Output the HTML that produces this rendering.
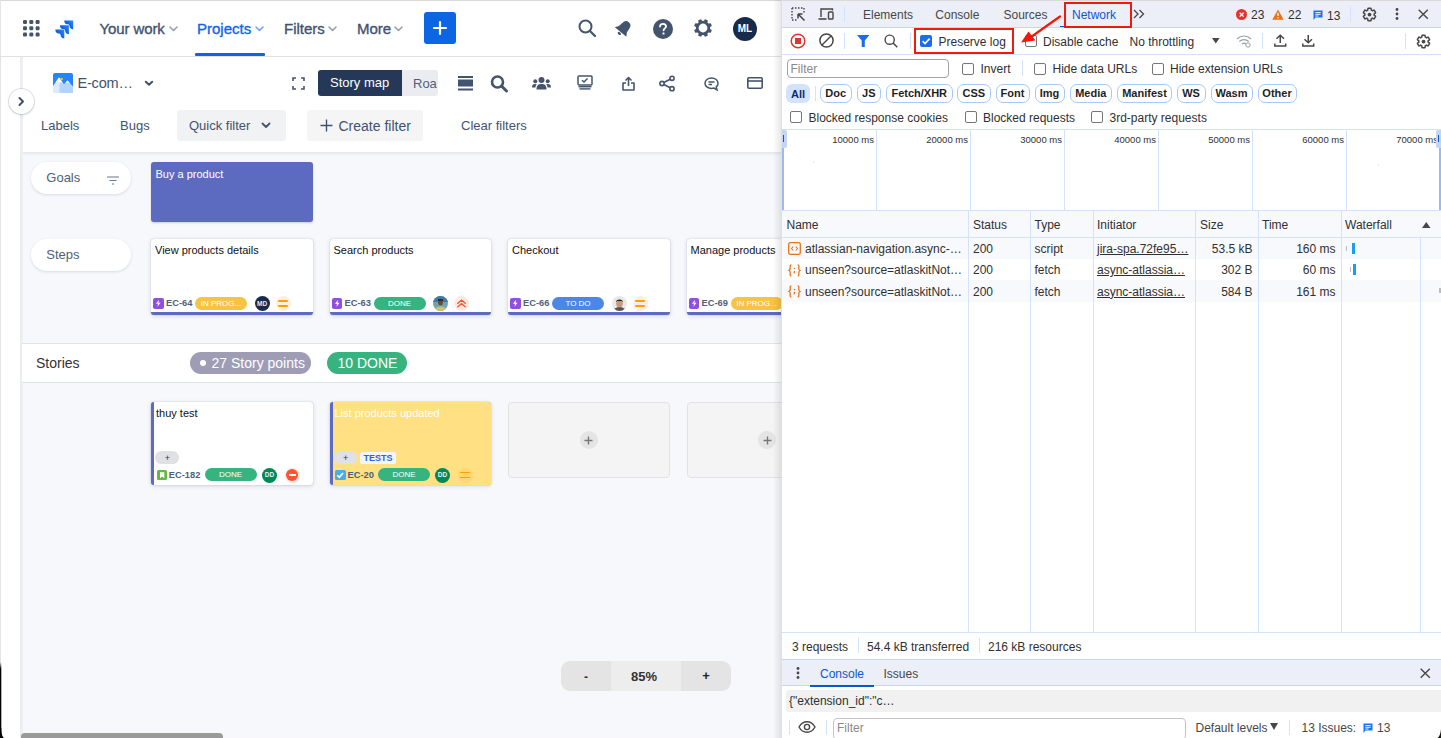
<!DOCTYPE html>
<html><head><meta charset="utf-8">
<style>
*{box-sizing:border-box;margin:0;padding:0}
html,body{width:1441px;height:738px;overflow:hidden;background:#fff;font-family:"Liberation Sans",sans-serif}
.a{position:absolute}
.t{position:absolute;white-space:nowrap;line-height:1}
svg{position:absolute;overflow:visible}
/* page */
#page{position:absolute;left:0;top:0;width:781px;height:738px;background:#fff;overflow:hidden}
.nav{color:#42526E;font-size:15px;font-weight:500;-webkit-text-stroke:0.35px currentColor}
.chev{position:absolute}
.card{position:absolute;background:#fff;border-radius:3px;box-shadow:0 0 1px rgba(9,30,66,.31),0 1px 4px rgba(9,30,66,.16)}
.ctitle{position:absolute;left:4px;top:6px;font-size:11px;color:#111;line-height:1}
.key{position:absolute;font-size:9.5px;font-weight:700;color:#505F79;line-height:1}
.pill{position:absolute;border-radius:7px;font-size:8.5px;color:#fff;text-align:center;line-height:13px;height:13px}
/* devtools */
#dt{position:absolute;left:0;top:0;width:1441px;height:738px;color:#1f1f1f;font-size:12px}
.dtt{position:absolute;white-space:nowrap;line-height:1;font-size:12px;color:#303030}
.cb{position:absolute;width:12px;height:12px;border:1px solid #747775;border-radius:2px;background:#fff}
.chip{position:absolute;height:19px;border:1px solid #A8C7FA;border-radius:7px;font-size:11px;font-weight:700;color:#1f1f1f;text-align:center;line-height:17px}
.sep{position:absolute;width:1px;background:#D3E3FD}
.vline{position:absolute;width:1px;background:#D3E3FD}
</style></head><body>
<div id="page">
  <div class="a" style="left:0;top:0;width:781px;height:1px;background:#D9D9D9"></div>
  <div class="a" style="left:0;top:0;width:1px;height:738px;background:#E4E4E4"></div>
  <!-- ===== NAV ===== -->
  <svg style="left:23px;top:20px" width="17" height="17" viewBox="0 0 17 17">
    <g fill="#44546F">
      <rect x="0" y="0" width="4" height="4" rx="1.3"/><rect x="6.3" y="0" width="4" height="4" rx="1.3"/><rect x="12.6" y="0" width="4" height="4" rx="1.3"/>
      <rect x="0" y="6.3" width="4" height="4" rx="1.3"/><rect x="6.3" y="6.3" width="4" height="4" rx="1.3"/><rect x="12.6" y="6.3" width="4" height="4" rx="1.3"/>
      <rect x="0" y="12.6" width="4" height="4" rx="1.3"/><rect x="6.3" y="12.6" width="4" height="4" rx="1.3"/><rect x="12.6" y="12.6" width="4" height="4" rx="1.3"/>
    </g>
  </svg>
  <svg style="left:55px;top:19.5px" width="19" height="19" viewBox="0 0 19 19">
    <defs><linearGradient id="jg" x1="1" y1="0" x2="0.3" y2="0.6"><stop offset="0" stop-color="#2D8BFF"/><stop offset="1" stop-color="#0A5BD6"/></linearGradient>
    <path id="jc" d="M0 0 H9 V9 Q6.6 9 5.7 7.2 L5.2 5.2 Q4.9 3.9 3.7 3.9 H2.6 Q0.4 3.7 0 0 Z" fill="url(#jg)"/></defs>
    <use href="#jc" x="9.2" y="0.4"/>
    <use href="#jc" x="4.9" y="5.2"/>
    <use href="#jc" x="0.3" y="9.5"/>
  </svg>
  <div class="t nav" style="left:99.5px;top:21px;letter-spacing:-0.1px">Your work</div>
  <svg style="left:169px;top:26.3px" width="9" height="6" viewBox="0 0 9 6"><path d="M1 1 L4.5 4.5 L8 1" stroke="#97A0AF" stroke-width="1.6" fill="none" stroke-linecap="round" stroke-linejoin="round"/></svg>
  <div class="t nav" style="left:197px;top:21px;color:#0C66E4">Projects</div>
  <svg style="left:255px;top:26.3px" width="9" height="6" viewBox="0 0 9 6"><path d="M1 1 L4.5 4.5 L8 1" stroke="#6FA4F5" stroke-width="1.6" fill="none" stroke-linecap="round" stroke-linejoin="round"/></svg>
  <div class="a" style="left:195px;top:53px;width:70px;height:3px;background:#0C66E4;border-radius:1px"></div>
  <div class="t nav" style="left:284px;top:21px">Filters</div>
  <svg style="left:328px;top:26.3px" width="9" height="6" viewBox="0 0 9 6"><path d="M1 1 L4.5 4.5 L8 1" stroke="#97A0AF" stroke-width="1.6" fill="none" stroke-linecap="round" stroke-linejoin="round"/></svg>
  <div class="t nav" style="left:357px;top:21px">More</div>
  <svg style="left:394px;top:26.3px" width="9" height="6" viewBox="0 0 9 6"><path d="M1 1 L4.5 4.5 L8 1" stroke="#97A0AF" stroke-width="1.6" fill="none" stroke-linecap="round" stroke-linejoin="round"/></svg>
  <div class="a" style="left:424px;top:12px;width:32px;height:32px;background:#0C66E4;border-radius:3px"></div>
  <svg style="left:433px;top:21px" width="14" height="14" viewBox="0 0 14 14"><path d="M7 1 V13 M1 7 H13" stroke="#fff" stroke-width="2.2" stroke-linecap="round"/></svg>
  <!-- right icons -->
  <svg style="left:578px;top:19px" width="18" height="18" viewBox="0 0 18 18"><circle cx="7.5" cy="7.5" r="6" stroke="#44546F" stroke-width="2" fill="none"/><path d="M12 12 L17 17" stroke="#44546F" stroke-width="2.2" stroke-linecap="round"/></svg>
  <svg style="left:613px;top:18px" width="21" height="21" viewBox="0 0 21 21"><g transform="rotate(40 10.5 10.5)"><path d="M10.5 2.2 C7.5 2.2 6.3 4 6 7 L5.3 11.5 L3 15 H18 L15.7 11.5 L15 7 C14.7 4 13.5 2.2 10.5 2.2 Z" fill="#44546F"/><ellipse cx="10.5" cy="17" rx="1.9" ry="1.2" fill="#44546F"/></g></svg>
  <svg style="left:653px;top:18.5px" width="20" height="20" viewBox="0 0 20 20"><circle cx="10" cy="10" r="10" fill="#44546F"/><path d="M7 7.6 C7 5.8 8.3 4.8 10 4.8 C11.8 4.8 13 5.9 13 7.4 C13 9.3 10.6 9.4 10.6 11.3" stroke="#fff" stroke-width="1.8" fill="none" stroke-linecap="round"/><rect x="9.5" y="13.6" width="2" height="2" rx="0.4" fill="#fff"/></svg>
  <svg style="left:693.6px;top:19.3px" width="18" height="18" viewBox="0 0 18 18"><g fill="#44546F"><rect x="7.2" y="0" width="3.6" height="4" rx="1" transform="rotate(22.5 9 9)"/><rect x="7.2" y="0" width="3.6" height="4" rx="1" transform="rotate(67.5 9 9)"/><rect x="7.2" y="0" width="3.6" height="4" rx="1" transform="rotate(112.5 9 9)"/><rect x="7.2" y="0" width="3.6" height="4" rx="1" transform="rotate(157.5 9 9)"/><rect x="7.2" y="0" width="3.6" height="4" rx="1" transform="rotate(202.5 9 9)"/><rect x="7.2" y="0" width="3.6" height="4" rx="1" transform="rotate(247.5 9 9)"/><rect x="7.2" y="0" width="3.6" height="4" rx="1" transform="rotate(292.5 9 9)"/><rect x="7.2" y="0" width="3.6" height="4" rx="1" transform="rotate(337.5 9 9)"/></g><circle cx="9" cy="9" r="5.8" fill="none" stroke="#44546F" stroke-width="2.8"/></svg>
  <div class="a" style="left:733px;top:16.5px;width:24px;height:24px;border-radius:50%;background:#172B4D"></div>
  <div class="t" style="left:733px;top:24px;width:24px;text-align:center;color:#fff;font-size:10px;font-weight:700">ML</div>
  <div class="a" style="left:0;top:56px;width:781px;height:1px;background:#DFE1E6"></div>
  <!-- ===== SIDEBAR STRIP ===== -->
  <div class="a" style="left:20px;top:57px;width:3px;height:681px;background:linear-gradient(90deg,#EAEBEF,#F0F1F4)"></div>
  <!-- ===== TOOLBAR ===== -->
  <div class="a" style="left:23px;top:57px;width:758px;height:95px;background:#fff"></div>
  <!-- board bg -->
  <div class="a" style="left:23px;top:152px;width:758px;height:586px;background:#F7F8FC"></div>
  <div class="a" style="left:23px;top:152px;width:758px;height:4px;background:linear-gradient(#E4E6EB,#F7F8FC)"></div>
  <!-- project icon -->
  <svg style="left:53px;top:73px" width="20" height="20" viewBox="0 0 20 20">
    <rect width="20" height="20" rx="2" fill="#2684FF"/>
    <path d="M0 20 V13 L6 4.5 L11 11.5 L14.5 7.5 L20 14 V20 Z" fill="#DEEBFF"/>
    <path d="M6.5 20 V9 L11 11.5 L14.5 7.5 L20 14 V20 Z" fill="#B3D4FF"/>
    <path d="M2.5 9.5 L6 4.5 L9.5 9.5 L7.5 8.8 L6 10 L4.5 8.8 Z M12.5 9.8 L14.5 7.5 L16.8 10.2 L14.5 9.5 Z" fill="#fff"/>
    <circle cx="8.6" cy="6" r="1.3" fill="#FFC400"/>
  </svg>
  <div class="t" style="left:77.5px;top:75.5px;font-size:14.5px;color:#42526E;letter-spacing:-0.2px">E-com…</div>
  <svg style="left:144px;top:80px" width="10" height="7" viewBox="0 0 10 7"><path d="M1.8 1.8 L5 4.8 L8.2 1.8" stroke="#42526E" stroke-width="2" fill="none" stroke-linecap="round" stroke-linejoin="round"/></svg>
  <!-- fullscreen -->
  <svg style="left:292px;top:77px" width="13" height="13" viewBox="0 0 13 13"><path d="M1 4 V1 H4 M9 1 H12 V4 M12 9 V12 H9 M4 12 H1 V9" stroke="#44546F" stroke-width="1.6" fill="none"/></svg>
  <div class="a" style="left:318px;top:70px;width:84px;height:26px;background:#253858;border-radius:3px 0 0 3px"></div>
  <div class="t" style="left:330px;top:76px;font-size:13px;color:#fff">Story map</div>
  <div class="a" style="left:402px;top:70px;width:35.5px;height:26px;background:#EBECF0;border-radius:0 3px 3px 0;overflow:hidden"><div class="t" style="left:11px;top:6.5px;font-size:13px;color:#505F79">Roa</div></div>
  <svg style="left:458px;top:76px" width="15" height="15" viewBox="0 0 15 15"><rect x="0" y="0" width="15" height="2" fill="#44546F"/><rect x="0" y="3.5" width="15" height="7" fill="#44546F"/><rect x="0" y="12.5" width="15" height="2" fill="#44546F"/></svg>
  <svg style="left:490px;top:75px" width="19" height="17" viewBox="0 0 19 17"><circle cx="7.5" cy="7" r="5.5" stroke="#44546F" stroke-width="2.6" fill="none"/><path d="M11.5 11 L16.5 16" stroke="#44546F" stroke-width="3" stroke-linecap="round"/></svg>
  <svg style="left:532px;top:76.5px" width="19" height="13" viewBox="0 0 19 13"><g fill="#44546F"><circle cx="9.5" cy="3" r="3"/><circle cx="3.3" cy="4.3" r="2"/><circle cx="15.7" cy="4.3" r="2"/><path d="M4.5 12.5 C4.5 8 6.5 7 9.5 7 C12.5 7 14.5 8 14.5 12.5 Z"/><path d="M0 10.5 C0 7.5 1.5 7 3.5 7 C4.5 7 4.8 7.3 4.8 7.3 C3.8 8.2 3.5 9.5 3.5 10.5 Z"/><path d="M19 10.5 C19 7.5 17.5 7 15.5 7 C14.5 7 14.2 7.3 14.2 7.3 C15.2 8.2 15.5 9.5 15.5 10.5 Z"/></g></svg>
  <svg style="left:577px;top:75px" width="16" height="16" viewBox="0 0 16 16"><g fill="none" stroke="#44546F" stroke-width="1.5"><rect x="1" y="1" width="14" height="9" rx="1"/><path d="M5 5.2 L7 7 L10.5 3.5"/></g><g fill="#44546F"><rect x="1.5" y="11" width="13" height="1.4"/><rect x="2.5" y="13.2" width="11" height="1.4"/></g></svg>
  <svg style="left:622px;top:75.5px" width="13" height="15" viewBox="0 0 13 15"><g fill="none" stroke="#44546F" stroke-width="1.6" stroke-linejoin="round"><path d="M6.5 10 V1.5 M3.5 4.5 L6.5 1.5 L9.5 4.5"/><path d="M4 7 H1 V14 H12 V7 H9"/></g></svg>
  <svg style="left:658.7px;top:75.5px" width="16" height="15" viewBox="0 0 16 15"><g fill="none" stroke="#44546F" stroke-width="1.6"><circle cx="3" cy="7.5" r="2.1"/><circle cx="13" cy="2.3" r="2.1"/><circle cx="13" cy="12.7" r="2.1"/><path d="M4.8 6.5 L11.2 3.3 M4.8 8.5 L11.2 11.7"/></g></svg>
  <svg style="left:704px;top:76.5px" width="15" height="14" viewBox="0 0 15 14"><g fill="none" stroke="#44546F" stroke-width="1.5"><path d="M7.5 1 C11.2 1 14 3.3 14 6.2 C14 7.8 13.3 9 12.2 9.8 L13 12.8 L10 11 C9.2 11.3 8.4 11.4 7.5 11.4 C3.8 11.4 1 9.1 1 6.2 C1 3.3 3.8 1 7.5 1 Z"/><path d="M4.5 5 H10.5 M4.5 7.5 H8"/></g></svg>
  <svg style="left:746.6px;top:77px" width="16" height="12" viewBox="0 0 16 12"><g fill="none" stroke="#44546F" stroke-width="1.6"><rect x="0.8" y="0.8" width="14.4" height="10.4" rx="1.2"/><path d="M0.8 4 H15.2"/></g></svg>
  <!-- filters row -->
  <div class="t" style="left:41px;top:118.7px;font-size:13px;color:#42526E">Labels</div>
  <div class="t" style="left:120px;top:118.7px;font-size:13px;color:#42526E">Bugs</div>
  <div class="a" style="left:177px;top:109.5px;width:109px;height:31.5px;background:#F1F2F4;border-radius:3px"></div>
  <div class="t" style="left:189px;top:118.7px;font-size:13px;color:#42526E">Quick filter</div>
  <svg style="left:261px;top:122px" width="10" height="7" viewBox="0 0 10 7"><path d="M1.5 1.5 L5 5 L8.5 1.5" stroke="#42526E" stroke-width="1.8" fill="none" stroke-linecap="round" stroke-linejoin="round"/></svg>
  <div class="a" style="left:307px;top:109.5px;width:115.5px;height:31.5px;background:#F5F5F6;border-radius:3px"></div>
  <svg style="left:320px;top:118.5px" width="13" height="13" viewBox="0 0 13 13"><path d="M6.5 0.5 V12.5 M0.5 6.5 H12.5" stroke="#42526E" stroke-width="1.4"/></svg>
  <div class="t" style="left:338.5px;top:118.5px;font-size:14px;color:#42526E">Create filter</div>
  <div class="t" style="left:461px;top:118.7px;font-size:13px;color:#42526E">Clear filters</div>
  <!-- sidebar toggle -->
  <div class="a" style="left:8.5px;top:88.5px;width:25px;height:25px;border-radius:50%;background:#fff;box-shadow:0 0 0 1px rgba(9,30,66,.1),0 1px 3px rgba(9,30,66,.15)"></div>
  <svg style="left:17.5px;top:96.5px" width="7" height="9" viewBox="0 0 7 9"><path d="M1.5 1 L5 4.5 L1.5 8" stroke="#42526E" stroke-width="2" fill="none" stroke-linecap="round" stroke-linejoin="round"/></svg>

  <!-- ===== BOARD ===== -->
  <div class="a" style="left:31px;top:162px;width:100px;height:32px;border-radius:16px;background:#fff;box-shadow:0 1px 3px rgba(9,30,66,.13)"></div>
  <div class="t" style="left:46.3px;top:171px;font-size:13px;color:#505F79">Goals</div>
  <svg style="left:107px;top:175.5px" width="12" height="9" viewBox="0 0 12 9"><path d="M0 1 H12 M2.5 4.5 H9.5 M5 8 H7" stroke="#6B778C" stroke-width="1.1"/></svg>
  <div class="a" style="left:31px;top:238.5px;width:100px;height:32.5px;border-radius:16px;background:#fff;box-shadow:0 1px 3px rgba(9,30,66,.13)"></div>
  <div class="t" style="left:46.3px;top:247.5px;font-size:13px;color:#505F79">Steps</div>

  <div class="a" style="left:151px;top:162px;width:161.75px;height:59.5px;background:#5C6BC0;border-radius:3px;box-shadow:0 1px 2px rgba(9,30,66,.2)"></div>
  <div class="t" style="left:155.5px;top:169px;font-size:11px;color:#fff">Buy a product</div>

  <!-- step cards -->
  <div class="card" style="left:151px;top:238.5px;width:161.75px;height:76.5px;border-bottom:3px solid #5C6BC0">
    <div class="ctitle">View products details</div>
  </div>
  <div class="card" style="left:329.5px;top:238.5px;width:161.75px;height:76.5px;border-bottom:3px solid #5C6BC0">
    <div class="ctitle">Search products</div>
  </div>
  <div class="card" style="left:508px;top:238.5px;width:161.75px;height:76.5px;border-bottom:3px solid #5C6BC0">
    <div class="ctitle">Checkout</div>
  </div>
  <div class="card" style="left:686.5px;top:238.5px;width:161.75px;height:76.5px;border-bottom:3px solid #5C6BC0">
    <div class="ctitle">Manage products</div>
  </div>

  <!-- stories band -->
  <div class="a" style="left:22px;top:343px;width:759px;height:39.5px;background:#fff;border-top:1px solid #DFE3EC;border-bottom:1px solid #DFE3EC"></div>
  <div class="t" style="left:36px;top:356px;font-size:14px;color:#333">Stories</div>
  <div class="a" style="left:189.5px;top:352px;width:121.5px;height:22px;border-radius:11px;background:#9E9DB5"></div>
  <div class="a" style="left:200px;top:360px;width:6px;height:6px;border-radius:50%;background:#fff"></div>
  <div class="t" style="left:211.5px;top:356px;font-size:14px;color:#fff">27 Story points</div>
  <div class="a" style="left:327px;top:352px;width:80px;height:22px;border-radius:11px;background:#36B37E"></div>
  <div class="t" style="left:337.5px;top:356px;font-size:14px;color:#fff">10 DONE</div>

  <!-- story cards -->
  <div class="card" style="left:151px;top:402px;width:161.5px;height:83px;border-left:3px solid #5C6BC0">
    <div class="ctitle" style="left:2px">thuy test</div>
  </div>
  <div class="card" style="left:329.5px;top:402px;width:161.5px;height:83px;border-left:3px solid #5C6BC0;background:#FFE082">
    <div class="ctitle" style="left:2px;color:#fff">List products updated</div>
  </div>
  <div class="a" style="left:508px;top:402px;width:161.5px;height:76px;background:#F4F4F4;border:1px solid #E2E2E2;border-radius:4px"></div>
  <div class="a" style="left:579.5px;top:431px;width:18px;height:18px;border-radius:50%;background:#E4E4E4"></div>
  <svg style="left:584px;top:435.5px" width="9" height="9" viewBox="0 0 9 9"><path d="M4.5 0.5 V8.5 M0.5 4.5 H8.5" stroke="#777" stroke-width="1.4"/></svg>
  <div class="a" style="left:686.5px;top:402px;width:161.5px;height:76px;background:#F4F4F4;border:1px solid #E2E2E2;border-radius:4px"></div>
  <div class="a" style="left:758px;top:431px;width:18px;height:18px;border-radius:50%;background:#E4E4E4"></div>
  <svg style="left:762.5px;top:435.5px" width="9" height="9" viewBox="0 0 9 9"><path d="M4.5 0.5 V8.5 M0.5 4.5 H8.5" stroke="#777" stroke-width="1.4"/></svg>

  <div class="a" style="left:153px;top:298.0px;width:10.8px;height:10.8px;background:#904EE2;border-radius:2px"></div><svg style="left:153px;top:298.0px" width="10.5" height="10.5" viewBox="0 0 10.5 10.5"><path d="M6 1.8 L3 5.8 H5 L4.5 8.8 L7.5 4.8 H5.5 Z" fill="#fff"/></svg>
<div class="t" style="left:166px;top:299.0px;font-size:9.3px;font-weight:700;color:#505F79">EC-64</div>
<div class="a" style="left:195px;top:297.0px;width:52px;height:13px;border-radius:6.5px;background:#F6C342"></div><div class="t" style="left:195px;top:300.0px;width:52px;text-align:center;font-size:8px;color:#fff">IN PROG...</div>
<div class="a" style="left:254.6px;top:296.0px;width:15px;height:15px;border-radius:50%;background:#172B4D"></div><div class="t" style="left:254.6px;top:300.5px;width:15px;text-align:center;font-size:6.5px;font-weight:700;color:#fff;opacity:.9">MD</div>
<div class="a" style="left:275.6px;top:296.0px;width:15px;height:15px;border-radius:50%;background:#FFEDE0"></div><div class="a" style="left:278.1px;top:300.1px;width:10px;height:1.9px;background:#FFA000;border-radius:1px"></div><div class="a" style="left:278.1px;top:305.0px;width:10px;height:1.9px;background:#FFA000;border-radius:1px"></div>
<div class="a" style="left:331.5px;top:298.0px;width:10.8px;height:10.8px;background:#904EE2;border-radius:2px"></div><svg style="left:331.5px;top:298.0px" width="10.5" height="10.5" viewBox="0 0 10.5 10.5"><path d="M6 1.8 L3 5.8 H5 L4.5 8.8 L7.5 4.8 H5.5 Z" fill="#fff"/></svg>
<div class="t" style="left:344.5px;top:299.0px;font-size:9.3px;font-weight:700;color:#505F79">EC-63</div>
<div class="a" style="left:373.5px;top:297.0px;width:52px;height:13px;border-radius:6.5px;background:#36B37E"></div><div class="t" style="left:373.5px;top:300.0px;width:52px;text-align:center;font-size:8px;color:#fff">DONE</div>
<svg style="left:433.1px;top:296.0px" width="15" height="15" viewBox="0 0 15 15"><defs><clipPath id="pc433.1"><circle cx="7.5" cy="7.5" r="7.5"/></clipPath></defs><g clip-path="url(#pc433.1)"><rect width="15" height="15" fill="#6FA3B8"/><rect y="0" width="15" height="6" fill="#3E7BA0"/><ellipse cx="7.5" cy="15" rx="6.5" ry="4.5" fill="#C9C36A"/><ellipse cx="7.5" cy="6.5" rx="2.4" ry="3" fill="#6B4A35"/><rect x="5" y="3.2" width="5" height="1.6" fill="#222"/></g></svg>
<div class="a" style="left:454.1px;top:296.0px;width:15px;height:15px;border-radius:50%;background:#FFE9E3"></div><svg style="left:454.1px;top:296.0px" width="15" height="15" viewBox="0 0 15 15"><path d="M3.8 7.3 L7.5 4.2 L11.2 7.3 M3.8 10.8 L7.5 7.7 L11.2 10.8" stroke="#FF5630" stroke-width="1.5" fill="none" stroke-linecap="round"/></svg>
<div class="a" style="left:510px;top:298.0px;width:10.8px;height:10.8px;background:#904EE2;border-radius:2px"></div><svg style="left:510px;top:298.0px" width="10.5" height="10.5" viewBox="0 0 10.5 10.5"><path d="M6 1.8 L3 5.8 H5 L4.5 8.8 L7.5 4.8 H5.5 Z" fill="#fff"/></svg>
<div class="t" style="left:523px;top:299.0px;font-size:9.3px;font-weight:700;color:#505F79">EC-66</div>
<div class="a" style="left:552px;top:297.0px;width:52px;height:13px;border-radius:6.5px;background:#4C87E6"></div><div class="t" style="left:552px;top:300.0px;width:52px;text-align:center;font-size:8px;color:#fff">TO DO</div>
<svg style="left:612px;top:296.0px" width="15" height="15" viewBox="0 0 15 15"><defs><clipPath id="pc612"><circle cx="7.5" cy="7.5" r="7.5"/></clipPath></defs><g clip-path="url(#pc612)"><rect width="15" height="15" fill="#E8E8E8"/><ellipse cx="7.5" cy="15" rx="6" ry="4" fill="#555"/><ellipse cx="7.5" cy="7.5" rx="3.3" ry="3.8" fill="#C89A7A"/><path d="M3.8 6.5 C3.8 2.5 11.2 2.5 11.2 6.5 L10 5 L5 5 Z" fill="#222"/></g></svg>
<div class="a" style="left:632.6px;top:296.0px;width:15px;height:15px;border-radius:50%;background:#FFEDE0"></div><div class="a" style="left:635.1px;top:300.1px;width:10px;height:1.9px;background:#FFA000;border-radius:1px"></div><div class="a" style="left:635.1px;top:305.0px;width:10px;height:1.9px;background:#FFA000;border-radius:1px"></div>
<div class="a" style="left:688.5px;top:298.0px;width:10.8px;height:10.8px;background:#904EE2;border-radius:2px"></div><svg style="left:688.5px;top:298.0px" width="10.5" height="10.5" viewBox="0 0 10.5 10.5"><path d="M6 1.8 L3 5.8 H5 L4.5 8.8 L7.5 4.8 H5.5 Z" fill="#fff"/></svg>
<div class="t" style="left:701.5px;top:299.0px;font-size:9.3px;font-weight:700;color:#505F79">EC-69</div>
<div class="a" style="left:730.5px;top:297.0px;width:52px;height:13px;border-radius:6.5px;background:#F6C342"></div><div class="t" style="left:730.5px;top:300.0px;width:52px;text-align:center;font-size:8px;color:#fff">IN PROG...</div>
<div class="a" style="left:155.3px;top:451.2px;width:24px;height:12.8px;border-radius:6.4px;background:#DFE1E6"></div><div class="t" style="left:155.3px;top:453.7px;width:24px;text-align:center;font-size:9px;color:#253858">+</div>
<div class="a" style="left:156.8px;top:470px;width:10.3px;height:10.3px;background:#63BA3C;border-radius:1.5px"></div><svg style="left:156.8px;top:470px" width="10.3" height="10.3" viewBox="0 0 10.3 10.3"><path d="M3 2.2 H7.3 V8.3 L5.15 6.5 L3 8.3 Z" fill="#fff"/></svg>
<div class="t" style="left:168.8px;top:470.6px;font-size:9.3px;font-weight:700;color:#505F79">EC-182</div>
<div class="a" style="left:204.5px;top:468.4px;width:52px;height:13px;border-radius:6.5px;background:#36B37E"></div><div class="t" style="left:204.5px;top:471.4px;width:52px;text-align:center;font-size:8px;color:#fff">DONE</div>
<div class="a" style="left:261.9px;top:467.5px;width:15px;height:15px;border-radius:50%;background:#00875A"></div><div class="t" style="left:261.9px;top:472.0px;width:15px;text-align:center;font-size:6.5px;font-weight:700;color:#fff;opacity:.9">DD</div>
<div class="a" style="left:284.5px;top:467.5px;width:15px;height:15px;border-radius:50%;background:#FFE3DC"></div><div class="a" style="left:286.0px;top:469.0px;width:12px;height:12px;border-radius:50%;background:#FF5630"></div><div class="a" style="left:288.5px;top:474.1px;width:7px;height:1.8px;background:#fff"></div>
<div class="a" style="left:334.0px;top:451.2px;width:23.4px;height:12.8px;border-radius:6.4px;background:#DFE1E6"></div><div class="t" style="left:334.0px;top:453.7px;width:23.4px;text-align:center;font-size:9px;color:#253858">+</div>
<div class="a" style="left:360.0px;top:451.6px;width:36px;height:12.4px;border-radius:2px;background:#F4F5F7"></div><div class="t" style="left:360.0px;top:454px;width:36px;text-align:center;font-size:9px;font-weight:700;color:#2E63D8">TESTS</div>
<div class="a" style="left:335.3px;top:470px;width:10.3px;height:10.3px;background:#4BADE8;border-radius:1.5px"></div><svg style="left:335.3px;top:470px" width="10.3" height="10.3" viewBox="0 0 10.3 10.3"><path d="M2.3 5.3 L4.3 7.3 L8 3" stroke="#fff" stroke-width="1.6" fill="none"/></svg>
<div class="t" style="left:347.5px;top:470.6px;font-size:9.3px;font-weight:700;color:#505F79">EC-20</div>
<div class="a" style="left:378.0px;top:468.4px;width:52px;height:13px;border-radius:6.5px;background:#36B37E"></div><div class="t" style="left:378.0px;top:471.4px;width:52px;text-align:center;font-size:8px;color:#fff">DONE</div>
<div class="a" style="left:435.0px;top:467.5px;width:15px;height:15px;border-radius:50%;background:#00875A"></div><div class="t" style="left:435.0px;top:472.0px;width:15px;text-align:center;font-size:6.5px;font-weight:700;color:#fff;opacity:.9">DD</div>
<div class="a" style="left:457.5px;top:467.5px;width:15px;height:15px;border-radius:50%;background:#FFD676"></div><div class="a" style="left:460.0px;top:471.6px;width:10px;height:1.9px;background:#FFA000;border-radius:1px"></div><div class="a" style="left:460.0px;top:476.5px;width:10px;height:1.9px;background:#FFA000;border-radius:1px"></div>
  <!-- zoom widget -->
  <div class="a" style="left:561px;top:661px;width:170px;height:30px;border-radius:9px;background:#E4E4E4;overflow:hidden"><div class="a" style="left:50px;top:0;width:70px;height:30px;background:#EDEDED"></div></div>
  <div class="t" style="left:561px;top:671px;width:50px;text-align:center;font-size:12px;font-weight:700;color:#333">-</div>
  <div class="t" style="left:609px;top:670px;width:70px;text-align:center;font-size:13px;font-weight:700;color:#333">85%</div>
  <div class="t" style="left:681px;top:669.3px;width:50px;text-align:center;font-size:13px;font-weight:700;color:#222">+</div>
  <!-- scrollbar -->
  <div class="a" style="left:21px;top:733px;width:202px;height:8px;border-radius:4px;background:#9A9A9A"></div>
  <!-- right edge shadow -->
  <div class="a" style="left:773px;top:0;width:8px;height:738px;background:linear-gradient(90deg,rgba(0,0,0,0),rgba(0,0,0,.09))"></div>
  <!-- bottom-left window corner -->
  <svg style="left:0;top:650px" width="12" height="88" viewBox="0 0 12 88"><defs><linearGradient id="blk" x1="0" y1="0" x2="0" y2="1"><stop offset="0" stop-color="#000" stop-opacity="0"/><stop offset="1" stop-color="#000"/></linearGradient></defs><rect x="0" y="12" width="1.3" height="7" fill="url(#blk)"/><rect x="0" y="19" width="1.3" height="69" fill="#000"/><path d="M0 78 V88 H4 Q1.3 86 1.3 78 Z" fill="#000"/></svg>
</div>

<div id="dt">
  <div class="a" style="left:781px;top:0;width:660px;height:738px;background:#fff"></div>
  <div class="a" style="left:781px;top:0;width:660px;height:1px;background:#D9D9D9"></div>
  <div class="a" style="left:781px;top:0;width:1px;height:738px;background:#D3E2FA"></div>
  <!-- tab bar -->
  <div class="a" style="left:782px;top:1px;width:659px;height:26px;background:#ECEFF7"></div>
  <div class="a" style="left:782px;top:27px;width:659px;height:1px;background:#C6D5F0"></div>
  <svg style="left:791px;top:7px" width="15" height="14" viewBox="0 0 15 14"><path d="M1 1 H13 M1 1 V13 M1 13 H6 M13 1 V6" stroke="#474747" stroke-width="1.4" stroke-dasharray="1.5 1.5" fill="none"/><path d="M7 7 L13.5 13.5 M7 7 H11.5 M7 7 V11.5" stroke="#474747" stroke-width="1.5" fill="none"/></svg>
  <svg style="left:818px;top:8px" width="16" height="12" viewBox="0 0 16 12"><path d="M3 9 V1 H14.5 V2.5" stroke="#474747" stroke-width="1.4" fill="none"/><path d="M0.5 11 H8.5" stroke="#474747" stroke-width="1.6"/><rect x="10.5" y="4" width="4.5" height="7" rx="0.8" stroke="#474747" stroke-width="1.4" fill="none"/></svg>
  <div class="sep" style="left:844px;top:6px;height:15.5px"></div>
  <div class="dtt" style="left:863px;top:9px;color:#474747">Elements</div>
  <div class="dtt" style="left:935.3px;top:9px;color:#474747">Console</div>
  <div class="dtt" style="left:1003.5px;top:9px;color:#474747">Sources</div>
  <div class="a" style="left:1060px;top:25.5px;width:8px;height:1.5px;background:#0B57D0"></div>
  <div class="dtt" style="left:1072px;top:9px;color:#0B57D0">Network</div>
  <svg style="left:1133px;top:8.5px" width="12" height="10" viewBox="0 0 12 10"><path d="M1 1 L5 5 L1 9 M6.5 1 L10.5 5 L6.5 9" stroke="#474747" stroke-width="1.3" fill="none"/></svg>
  <!-- counters -->
  <div class="a" style="left:1235.5px;top:9px;width:11.3px;height:11.3px;border-radius:50%;background:#DC362E"></div>
  <svg style="left:1235.5px;top:9px" width="11.3" height="11.3" viewBox="0 0 11.3 11.3"><path d="M3.7 3.7 L7.6 7.6 M7.6 3.7 L3.7 7.6" stroke="#fff" stroke-width="1.3"/></svg>
  <div class="dtt" style="left:1251px;top:9px;color:#303030">23</div>
  <svg style="left:1272px;top:8.5px" width="12" height="11" viewBox="0 0 12 11"><path d="M6 0.5 L11.7 10.7 H0.3 Z" fill="#E8711A"/><path d="M6 3.8 V7" stroke="#fff" stroke-width="1.3"/><circle cx="6" cy="8.8" r="0.75" fill="#fff"/></svg>
  <div class="dtt" style="left:1288px;top:9px;color:#303030">22</div>
  <svg style="left:1312.5px;top:9.5px" width="10" height="10.5" viewBox="0 0 10 10.5"><path d="M0.5 0.5 H9.5 V7.5 H2.5 L0.5 10 Z" fill="#1A73E8"/><path d="M2.3 2.6 H7.7 M2.3 4.3 H7.7 M2.3 6 H5.5" stroke="#fff" stroke-width="0.9"/></svg>
  <div class="dtt" style="left:1327px;top:9.5px;color:#303030">13</div>
  <div class="sep" style="left:1350px;top:6px;height:15.5px"></div>
  <svg style="left:1361.5px;top:6.5px" width="15" height="15" viewBox="0 0 24 24"><path fill="none" stroke="#474747" stroke-width="2.4" d="M19.43 12.98c.04-.32.07-.64.07-.98s-.03-.66-.07-.98l2.11-1.65a.5.5 0 0 0 .12-.64l-2-3.46a.5.5 0 0 0-.61-.22l-2.49 1a7.3 7.3 0 0 0-1.69-.98l-.38-2.65A.49.49 0 0 0 14 2h-4a.49.49 0 0 0-.49.42l-.38 2.65c-.61.25-1.170.59-1.69.98l-2.49-1a.5.5 0 0 0-.61.22l-2 3.460a.49.49 0 0 0 .12.64l2.11 1.65c-.04.32-.07.65-.07.98s.03.66.07.98l-2.11 1.65a.5.5 0 0 0-.12.64l2 3.46a.5.5 0 0 0 .61.22l2.49-1c.52.4 1.08.73 1.69.98l.38 2.65c.03.24.24.42.49.42h4c.25 0 .46-.18.49-.42l.38-2.65c.61-.25 1.17-.59 1.69-.98l2.49 1a.5.5 0 0 0 .61-.22l2-3.46a.5.5 0 0 0-.12-.64l-2.110-1.65z"/><circle cx="12" cy="12" r="3" fill="#474747"/></svg>
  <svg style="left:1395px;top:8px" width="4" height="12" viewBox="0 0 4 12"><g fill="#474747"><circle cx="2" cy="1.5" r="1.4"/><circle cx="2" cy="6" r="1.4"/><circle cx="2" cy="10.5" r="1.4"/></g></svg>
  <svg style="left:1418px;top:9px" width="10.5" height="10.5" viewBox="0 0 10.5 10.5"><path d="M0.7 0.7 L9.8 9.8 M9.8 0.7 L0.7 9.8" stroke="#474747" stroke-width="1.4"/></svg>
  <!-- toolbar row -->
  <div class="a" style="left:782px;top:54px;width:659px;height:1px;background:#D3E3FD"></div>
  <svg style="left:790px;top:33px" width="16" height="16" viewBox="0 0 16 16"><circle cx="8" cy="8" r="6.8" stroke="#DC362E" stroke-width="1.5" fill="none"/><rect x="5" y="5" width="6" height="6" fill="#DC362E"/></svg>
  <svg style="left:818.5px;top:33.3px" width="15" height="15" viewBox="0 0 15 15"><circle cx="7.5" cy="7.5" r="6.6" stroke="#474747" stroke-width="1.5" fill="none"/><path d="M3 12 L12 3" stroke="#474747" stroke-width="1.5"/></svg>
  <div class="sep" style="left:844px;top:33px;height:16px"></div>
  <svg style="left:857px;top:35px" width="12.5" height="12" viewBox="0 0 12.5 12"><path d="M0 0 H12.5 L7.8 5.5 V12 H4.7 V5.5 Z" fill="#1A6DE8"/></svg>
  <svg style="left:884px;top:34px" width="14" height="14" viewBox="0 0 14 14"><circle cx="5.7" cy="5.7" r="4.6" stroke="#474747" stroke-width="1.4" fill="none"/><path d="M9 9 L13.3 13.3" stroke="#474747" stroke-width="1.5"/></svg>
  <div class="sep" style="left:909.5px;top:33px;height:16px"></div>
  <div class="a" style="left:914px;top:27.5px;width:100px;height:26px;border:2px solid #F0190C"></div>
  <div class="a" style="left:920px;top:35px;width:12px;height:12px;border-radius:2px;background:#1A6DF0"></div>
  <svg style="left:920px;top:35px" width="12" height="12" viewBox="0 0 12 12"><path d="M2.6 6.2 L5 8.5 L9.6 3.6" stroke="#fff" stroke-width="1.6" fill="none"/></svg>
  <div class="dtt" style="left:938.5px;top:36px">Preserve log</div>
  <div class="cb" style="left:1024.5px;top:35px"></div>
  <div class="dtt" style="left:1043px;top:36px">Disable cache</div>
  <div class="dtt" style="left:1129.5px;top:36px">No throttling</div>
  <svg style="left:1212.2px;top:37.6px" width="7.6" height="5.6" viewBox="0 0 7.6 5.6"><path d="M0 0 H7.6 L3.8 5.6 Z" fill="#474747"/></svg>
  <svg style="left:1236px;top:33.5px" width="16" height="14" viewBox="0 0 16 14"><g fill="none" stroke="#9AA0A6" stroke-width="1.2"><path d="M1 5 C5 1 11 1 15 5"/><path d="M3.3 7.5 C6 5 10 5 12.7 7.5"/><path d="M6 10 C7 9.2 9 9.2 10 10"/></g><circle cx="12" cy="11" r="2.2" fill="#fff" stroke="#9AA0A6" stroke-width="1"/></svg>
  <div class="sep" style="left:1261.5px;top:33px;height:16px"></div>
  <svg style="left:1274px;top:34px" width="12.5" height="13" viewBox="0 0 12.5 13"><path d="M6.25 9 V1.2 M2.5 4.8 L6.25 1.2 L10 4.8 M0.8 9.5 V12 H11.7 V9.5" stroke="#474747" stroke-width="1.5" fill="none"/></svg>
  <svg style="left:1301.5px;top:34px" width="12.5" height="13" viewBox="0 0 12.5 13"><path d="M6.25 1 V8.8 M2.5 5.2 L6.25 8.8 L10 5.2 M0.8 9.5 V12 H11.7 V9.5" stroke="#474747" stroke-width="1.5" fill="none"/></svg>
  <div class="sep" style="left:1404.5px;top:33px;height:16px"></div>
  <svg style="left:1415.5px;top:33.5px" width="15" height="15" viewBox="0 0 24 24"><path fill="none" stroke="#474747" stroke-width="2.4" d="M19.43 12.98c.04-.32.07-.64.07-.98s-.03-.66-.07-.98l2.11-1.65a.5.5 0 0 0 .12-.64l-2-3.46a.5.5 0 0 0-.61-.22l-2.49 1a7.3 7.3 0 0 0-1.69-.98l-.38-2.65A.49.49 0 0 0 14 2h-4a.49.49 0 0 0-.49.42l-.38 2.65c-.61.25-1.17.59-1.69.98l-2.49-1a.5.5 0 0 0-.61.22l-2 3.46a.49.49 0 0 0 .12.64l2.11 1.65c-.04.32-.07.65-.07.98s.03.66.07.98l-2.11 1.65a.5.5 0 0 0-.12.64l2 3.46a.5.5 0 0 0 .61.22l2.49-1c.52.4 1.08.73 1.69.98l.38 2.65c.03.24.24.42.49.42h4c.25 0 .46-.18.49-.42l.38-2.65c.61-.25 1.17-.59 1.69-.98l2.49 1a.5.5 0 0 0 .61-.22l2-3.46a.5.5 0 0 0-.12-.64l-2.11-1.65z"/><circle cx="12" cy="12" r="3" fill="#474747"/></svg>
  <!-- arrow -->
  <svg style="left:1015px;top:10px" width="50" height="40" viewBox="0 0 50 40"><path d="M45 6.5 L16 27" stroke="#F0190C" stroke-width="2.2" stroke-linecap="round"/><path d="M6 32.5 L13.5 21.5 L20.5 30.5 Z" fill="#F0190C"/></svg>
  <div class="a" style="left:1064px;top:2px;width:68px;height:25.5px;border:2px solid #F0190C"></div>
  <!-- filter row -->
  <div class="a" style="left:786.5px;top:58.5px;width:162px;height:19.5px;border:1px solid #A3A3A3;border-radius:4px;background:#fff"></div>
  <div class="dtt" style="left:790.5px;top:63px;color:#8A8A8A">Filter</div>
  <div class="cb" style="left:962px;top:62.5px"></div>
  <div class="dtt" style="left:980.5px;top:63px">Invert</div>
  <div class="sep" style="left:1021.5px;top:60px;height:16px"></div>
  <div class="cb" style="left:1034px;top:62.5px"></div>
  <div class="dtt" style="left:1052.5px;top:63px">Hide data URLs</div>
  <div class="cb" style="left:1152px;top:62.5px"></div>
  <div class="dtt" style="left:1170px;top:63px">Hide extension URLs</div>
  <!-- chips -->
  <div class="a" style="left:786px;top:84px;width:24px;height:19px;border-radius:6px;background:#D3E3FD"></div>
  <div class="t" style="left:786px;top:88.5px;width:24px;text-align:center;font-size:11px;font-weight:700;color:#0A2E6E">All</div>
  <div class="sep" style="left:815px;top:86px;height:15px"></div>
  <div class="chip" style="left:819.5px;top:84px;width:32.5px">Doc</div>
  <div class="chip" style="left:856.5px;top:84px;width:24.5px">JS</div>
  <div class="chip" style="left:886px;top:84px;width:66.5px">Fetch/XHR</div>
  <div class="chip" style="left:956.5px;top:84px;width:34.5px">CSS</div>
  <div class="chip" style="left:995.5px;top:84px;width:34px">Font</div>
  <div class="chip" style="left:1034.5px;top:84px;width:30px">Img</div>
  <div class="chip" style="left:1069.5px;top:84px;width:42.5px">Media</div>
  <div class="chip" style="left:1117px;top:84px;width:55px">Manifest</div>
  <div class="chip" style="left:1176.5px;top:84px;width:29px">WS</div>
  <div class="chip" style="left:1210.5px;top:84px;width:42px">Wasm</div>
  <div class="chip" style="left:1257.5px;top:84px;width:39px">Other</div>
  <!-- blocked row -->
  <div class="cb" style="left:790px;top:111px"></div>
  <div class="dtt" style="left:808.5px;top:111.5px">Blocked response cookies</div>
  <div class="cb" style="left:964.5px;top:111px"></div>
  <div class="dtt" style="left:983px;top:111.5px">Blocked requests</div>
  <div class="cb" style="left:1091px;top:111px"></div>
  <div class="dtt" style="left:1109.5px;top:111.5px">3rd-party requests</div>
  <div class="a" style="left:782px;top:129px;width:659px;height:1px;background:#D3E3FD"></div>
  <!-- overview -->
  <div class="a" style="left:876px;top:130px;width:1px;height:80px;background:#D3E3FD"></div>
  <div class="a" style="left:970px;top:130px;width:1px;height:80px;background:#D3E3FD"></div>
  <div class="a" style="left:1064px;top:130px;width:1px;height:80px;background:#D3E3FD"></div>
  <div class="a" style="left:1158px;top:130px;width:1px;height:80px;background:#D3E3FD"></div>
  <div class="a" style="left:1252px;top:130px;width:1px;height:80px;background:#D3E3FD"></div>
  <div class="a" style="left:1346px;top:130px;width:1px;height:80px;background:#D3E3FD"></div>
  <div class="t" style="left:774px;top:135px;width:100px;text-align:right;font-size:9.5px;color:#303030">10000 ms</div>
  <div class="t" style="left:868px;top:135px;width:100px;text-align:right;font-size:9.5px;color:#303030">20000 ms</div>
  <div class="t" style="left:962px;top:135px;width:100px;text-align:right;font-size:9.5px;color:#303030">30000 ms</div>
  <div class="t" style="left:1056px;top:135px;width:100px;text-align:right;font-size:9.5px;color:#303030">40000 ms</div>
  <div class="t" style="left:1150px;top:135px;width:100px;text-align:right;font-size:9.5px;color:#303030">50000 ms</div>
  <div class="t" style="left:1244px;top:135px;width:100px;text-align:right;font-size:9.5px;color:#303030">60000 ms</div>
  <div class="t" style="left:1338px;top:135px;width:100px;text-align:right;font-size:9.5px;color:#303030">70000 ms</div>
  <div class="a" style="left:782px;top:130px;width:4.5px;height:18px;border-radius:0 2px 2px 0;background:#C3D6F7"></div>
  <div class="a" style="left:783px;top:135px;width:1px;height:7px;background:#0B57D0"></div>
  <div class="a" style="left:782px;top:148px;width:2px;height:62px;background:#9DB9EE"></div>
  <div class="a" style="left:1436px;top:130px;width:5px;height:18px;border-radius:2px 0 0 2px;background:#C3D6F7"></div>
  <div class="a" style="left:1438px;top:135px;width:1px;height:7px;background:#0B57D0"></div>
  <div class="a" style="left:1438.5px;top:148px;width:2px;height:62px;background:#9DB9EE"></div>
  <div class="a" style="left:812.5px;top:160.5px;width:1px;height:2px;background:#DDEBF7"></div>
  <div class="a" style="left:1378px;top:164px;width:1px;height:2px;background:#DDEBF7"></div>
  <div class="a" style="left:782px;top:210px;width:659px;height:1px;background:#D3E3FD"></div>
  <!-- table header -->
  <div class="a" style="left:782px;top:211px;width:659px;height:26px;background:#F8F9FD"></div>
  <div class="a" style="left:782px;top:237px;width:659px;height:1px;background:#D3E3FD"></div>
  <div class="a" style="left:782px;top:238px;width:659px;height:21px;background:#F8F9FD"></div>
  <div class="a" style="left:782px;top:280px;width:659px;height:21.5px;background:#F8F9FD"></div>
  <div class="vline" style="left:967.5px;top:211px;height:421px"></div>
  <div class="vline" style="left:1029.5px;top:211px;height:421px"></div>
  <div class="vline" style="left:1092.5px;top:211px;height:421px"></div>
  <div class="vline" style="left:1195px;top:211px;height:421px"></div>
  <div class="vline" style="left:1257.5px;top:211px;height:421px"></div>
  <div class="vline" style="left:1340.5px;top:211px;height:421px"></div>
  <div class="vline" style="left:1419.5px;top:238px;height:394px"></div>
  <div class="dtt" style="left:786.5px;top:219px">Name</div>
  <div class="dtt" style="left:973px;top:219px">Status</div>
  <div class="dtt" style="left:1034.5px;top:219px">Type</div>
  <div class="dtt" style="left:1097px;top:219px">Initiator</div>
  <div class="dtt" style="left:1200px;top:219px">Size</div>
  <div class="dtt" style="left:1262px;top:219px">Time</div>
  <div class="dtt" style="left:1345px;top:219px">Waterfall</div>
  <svg style="left:1421.5px;top:221.5px" width="8.5" height="6" viewBox="0 0 8.5 6"><path d="M4.25 0 L8.5 6 H0 Z" fill="#474747"/></svg>
  <!-- rows -->
  <svg style="left:787.5px;top:242px" width="13" height="13" viewBox="0 0 13 13"><rect x="0.7" y="0.7" width="11.6" height="11.6" rx="1.5" stroke="#E8711A" stroke-width="1.3" fill="none"/><path d="M5.2 4.5 L3.5 6.5 L5.2 8.5 M7.8 4.5 L9.5 6.5 L7.8 8.5" stroke="#E8711A" stroke-width="1.1" fill="none"/></svg>
  <div class="dtt" style="left:805px;top:243px">atlassian-navigation.async-…</div>
  <div class="dtt" style="left:973px;top:243px">200</div>
  <div class="dtt" style="left:1034.5px;top:243px">script</div>
  <div class="dtt" style="left:1097px;top:243px;text-decoration:underline">jira-spa.72fe95…</div>
  <div class="dtt" style="left:1152.5px;top:243px;width:100px;text-align:right">53.5 kB</div>
  <div class="dtt" style="left:1235.5px;top:243px;width:100px;text-align:right">160 ms</div>
  <div class="a" style="left:1345.5px;top:246px;width:1.5px;height:5px;background:#BDBDBD"></div>
  <div class="a" style="left:1352px;top:243px;width:2.5px;height:11px;background:#1A9DF5"></div>

  <svg style="left:787.5px;top:263.5px" width="13" height="13" viewBox="0 0 13 13"><path d="M3.3 1 C1.8 1 2.2 2.5 2.2 4.5 C2.2 6 1 6.5 1 6.5 C1 6.5 2.2 7 2.2 8.5 C2.2 10.5 1.8 12 3.3 12 M9.7 1 C11.2 1 10.8 2.5 10.8 4.5 C10.8 6 12 6.5 12 6.5 C12 6.5 10.8 7 10.8 8.5 C10.8 10.5 11.2 12 9.7 12" stroke="#E8711A" stroke-width="1.3" fill="none"/><circle cx="6.5" cy="4.5" r="0.8" fill="#E8711A"/><path d="M6.6 6.8 L6 9.3" stroke="#E8711A" stroke-width="1.2"/></svg>
  <div class="dtt" style="left:805px;top:264px">unseen?source=atlaskitNot…</div>
  <div class="dtt" style="left:973px;top:264px">200</div>
  <div class="dtt" style="left:1034.5px;top:264px">fetch</div>
  <div class="dtt" style="left:1097px;top:264px;text-decoration:underline">async-atlassia…</div>
  <div class="dtt" style="left:1152.5px;top:264px;width:100px;text-align:right">302 B</div>
  <div class="dtt" style="left:1235.5px;top:264px;width:100px;text-align:right">60 ms</div>
  <div class="a" style="left:1349.5px;top:267px;width:1.5px;height:5px;background:#BDBDBD"></div>
  <div class="a" style="left:1353px;top:264px;width:2.5px;height:11px;background:#1A9DF5"></div>

  <svg style="left:787.5px;top:285px" width="13" height="13" viewBox="0 0 13 13"><path d="M3.3 1 C1.8 1 2.2 2.5 2.2 4.5 C2.2 6 1 6.5 1 6.5 C1 6.5 2.2 7 2.2 8.5 C2.2 10.5 1.8 12 3.3 12 M9.7 1 C11.2 1 10.8 2.5 10.8 4.5 C10.8 6 12 6.5 12 6.5 C12 6.5 10.8 7 10.8 8.5 C10.8 10.5 11.2 12 9.7 12" stroke="#E8711A" stroke-width="1.3" fill="none"/><circle cx="6.5" cy="4.5" r="0.8" fill="#E8711A"/><path d="M6.6 6.8 L6 9.3" stroke="#E8711A" stroke-width="1.2"/></svg>
  <div class="dtt" style="left:805px;top:285.5px">unseen?source=atlaskitNot…</div>
  <div class="dtt" style="left:973px;top:285.5px">200</div>
  <div class="dtt" style="left:1034.5px;top:285.5px">fetch</div>
  <div class="dtt" style="left:1097px;top:285.5px;text-decoration:underline">async-atlassia…</div>
  <div class="dtt" style="left:1152.5px;top:285.5px;width:100px;text-align:right">584 B</div>
  <div class="dtt" style="left:1235.5px;top:285.5px;width:100px;text-align:right">161 ms</div>
  <div class="a" style="left:1439px;top:288px;width:1.5px;height:5px;background:#BDBDBD"></div>
  <!-- status bar -->
  <div class="a" style="left:782px;top:632px;width:659px;height:1px;background:#D3E3FD"></div>
  <div class="dtt" style="left:792px;top:641px">3 requests</div>
  <div class="sep" style="left:857.5px;top:638px;height:15px"></div>
  <div class="dtt" style="left:867px;top:641px">54.4 kB transferred</div>
  <div class="sep" style="left:979px;top:638px;height:15px"></div>
  <div class="dtt" style="left:988px;top:641px">216 kB resources</div>
  <!-- drawer -->
  <div class="a" style="left:782px;top:659px;width:659px;height:27px;background:#ECEFF7;border-top:1px solid #C6D5F0;border-bottom:1px solid #C6D5F0"></div>
  <svg style="left:796px;top:667px" width="4" height="12" viewBox="0 0 4 12"><g fill="#474747"><circle cx="2" cy="1.5" r="1.4"/><circle cx="2" cy="6" r="1.4"/><circle cx="2" cy="10.5" r="1.4"/></g></svg>
  <div class="dtt" style="left:820px;top:667.5px;color:#0B57D0">Console</div>
  <div class="a" style="left:810px;top:685px;width:64px;height:2px;background:#0B57D0"></div>
  <div class="dtt" style="left:883.5px;top:667.5px;color:#474747">Issues</div>
  <svg style="left:1420px;top:668px" width="10.5" height="10.5" viewBox="0 0 10.5 10.5"><path d="M0.7 0.7 L9.8 9.8 M9.8 0.7 L0.7 9.8" stroke="#474747" stroke-width="1.4"/></svg>
  <div class="a" style="left:786px;top:690px;width:655px;height:22px;background:#F1F1F1;border-radius:3px 0 0 3px"></div>
  <div class="dtt" style="left:789px;top:695px;color:#303030">{"extension_id":"c…</div>
  <div class="sep" style="left:788.5px;top:719.5px;height:15px"></div>
  <svg style="left:798px;top:721px" width="18" height="12" viewBox="0 0 18 12"><path d="M1 6 C3.5 1.5 6 0.8 9 0.8 C12 0.8 14.5 1.5 17 6 C14.5 10.5 12 11.2 9 11.2 C6 11.2 3.5 10.5 1 6 Z" stroke="#474747" stroke-width="1.4" fill="none"/><circle cx="9" cy="6" r="2.6" stroke="#474747" stroke-width="1.4" fill="none"/></svg>
  <div class="sep" style="left:825.5px;top:719.5px;height:15px"></div>
  <div class="a" style="left:833px;top:717.5px;width:353px;height:22px;border:1px solid #C4C4C4;border-radius:4px"></div>
  <div class="dtt" style="left:837px;top:722px;color:#8A8A8A">Filter</div>
  <div class="dtt" style="left:1195.5px;top:722px;color:#474747">Default levels</div>
  <svg style="left:1270px;top:723px" width="8" height="7" viewBox="0 0 8 7"><path d="M0 0 H8 L4 7 Z" fill="#474747"/></svg>
  <div class="sep" style="left:1289px;top:719.5px;height:15px"></div>
  <div class="dtt" style="left:1301.5px;top:722px;color:#474747">13 Issues:</div>
  <svg style="left:1362.5px;top:722.5px" width="10" height="10.5" viewBox="0 0 10 10.5"><path d="M0.5 0.5 H9.5 V7.5 H2.5 L0.5 10 Z" fill="#1A73E8"/><path d="M2.3 2.6 H7.7 M2.3 4.3 H7.7 M2.3 6 H5.5" stroke="#fff" stroke-width="0.9"/></svg>
  <div class="dtt" style="left:1377px;top:722px;color:#474747">13</div>
  <!-- bottom-right corner -->
  <svg style="left:1430px;top:720px" width="11" height="18" viewBox="0 0 11 18"><path d="M11 9 V18 H7.5 Q10.5 15.5 11 9 Z" fill="#1a1a10"/></svg>
</div>

</body></html>
